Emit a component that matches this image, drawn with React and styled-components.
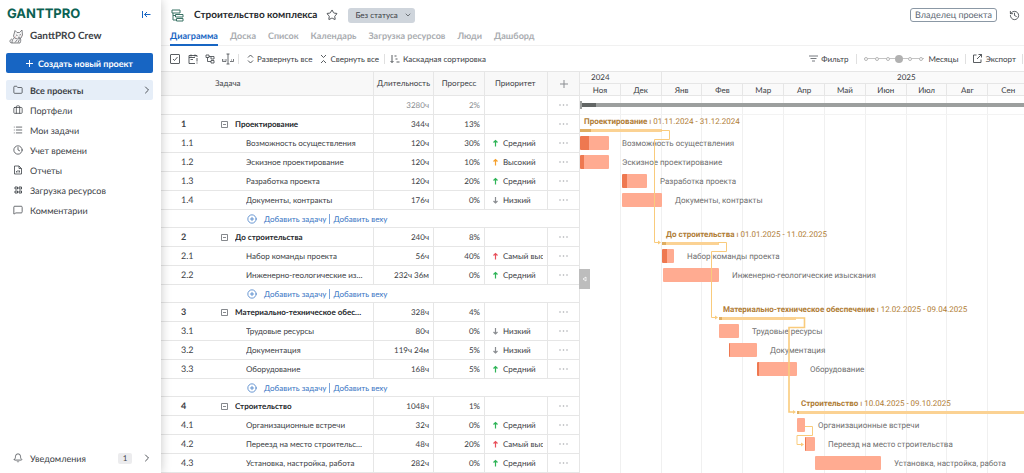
import React from 'react'
import styled, { createGlobalStyle } from 'styled-components'
import {
  Bell,
  Briefcase,
  ChevronDown,
  ChevronRight,
  CirclePlus,
  Clock,
  Folder,
  History,
  List,
  MessageSquare,
  Star,
} from 'lucide-react'

const colors = {
  blue: '#1765c3',
  text: '#3c4146',
  muted: '#a9acb0',
  line: '#e6e6e6',
  bar: '#ffab91',
  barDone: '#ee7850',
  summary: '#fbd293',
  summaryDone: '#dfae62',
  summaryText: '#b07d36',
}

const GlobalStyle = createGlobalStyle`
  * {
    box-sizing: border-box;
  }
  body {
    margin: 0;
    background: #fff;
    color: ${colors.text};
    font-family: Lato, "Liberation Sans", sans-serif;
    font-size: 8px;
    text-rendering: geometricPrecision;
    overflow: hidden;
  }
  button, input, select {
    font: inherit;
    color: inherit;
    text-rendering: inherit;
  }
  button {
    border: 0;
    padding: 0;
    background: none;
    cursor: pointer;
  }
  a {
    color: inherit;
    text-decoration: none;
  }
  svg {
    flex: none;
    display: block;
  }
`

const Page = styled.div`
  display: grid;
  grid-template-columns: 161px minmax(0, 1fr);
  height: 100vh;
`

/* sidebar */

const Sidebar = styled.aside`
  position: relative;
  z-index: 5;
  display: flex;
  flex-direction: column;
  padding: 8px 8px 5px 6px;
  background: #fff;
  box-shadow: 0 0 10px rgba(0, 0, 0, 0.22);
`
const LogoRow = styled.div`
  display: flex;
  align-items: center;
  justify-content: space-between;
  height: 12px;
  padding: 0 2px 0 1px;
  color: ${colors.blue};
`
const Logo = styled.a`
  color: #0b6152;
  font-family: Inter, sans-serif;
  font-size: 13px;
  font-weight: 700;
  line-height: 13px;
`
const Team = styled.div`
  display: flex;
  align-items: center;
  gap: 6px;
  height: 16px;
  margin: 8px 0 9px;
  padding-left: 3px;
  font-size: 10px;
  font-weight: 700;
`
const NewProject = styled.button`
  display: flex;
  align-items: center;
  justify-content: center;
  gap: 5px;
  height: 20px;
  margin-bottom: 7px;
  border-radius: 2px;
  background: ${colors.blue};
  color: #fff;
  font-size: 9px;
  font-weight: 700;
`
const NavItem = styled.a`
  display: flex;
  align-items: center;
  gap: 7px;
  height: 20px;
  padding: 0 0 0 7px;
  border-radius: 2px;
  background: ${props => props.$active ? '#e6eef8' : 'transparent'};
  font-size: 9px;
  font-weight: ${props => props.$active ? 700 : 400};
`
const NavLabel = styled.span`
  flex: 1;
`
const Notifications = styled(NavItem)`
  margin-top: auto;
`
const Count = styled.span`
  width: 14px;
  margin-right: 2px;
  border-radius: 2px;
  background: #ececee;
  font-size: 8px;
  line-height: 11px;
  text-align: center;
`

/* project header */

const Main = styled.main`
  display: flex;
  flex-direction: column;
  min-width: 0;
  overflow: hidden;
`
const ProjectHeader = styled.header`
  display: flex;
  align-items: center;
  height: 30px;
  padding: 0 4px 0 10px;
`
const ProjectTitle = styled.h1`
  margin: 0 9px 0 10px;
  color: #26292d;
  font-size: 10px;
  font-weight: 700;
`
const StatusButton = styled.button`
  display: flex;
  align-items: center;
  justify-content: space-between;
  width: 67px;
  height: 15px;
  margin-left: 10px;
  padding: 0 3px 0 7px;
  border-radius: 3px;
  background: #cfd5dc;
  font-size: 8px;
`
const OwnerButton = styled.button`
  height: 14px;
  margin: 0 12px 0 auto;
  padding: 0 4px;
  border: 1px solid #8b98a5;
  border-radius: 3px;
  color: #5d6874;
  font-size: 9px;
  line-height: 12px;
`
const Tabs = styled.nav`
  display: flex;
  gap: 12px;
  height: 16px;
  padding-left: 9px;
  border-bottom: 1px solid #f1f1f1;
`
const Tab = styled.a`
  height: 16px;
  border-bottom: ${props => props.$active ? `2px solid ${colors.blue}` : '0'};
  color: ${props => props.$active ? colors.blue : colors.muted};
  font-size: 9px;
  font-weight: 700;
  line-height: 12px;
`

/* toolbar */

const Toolbar = styled.div`
  display: flex;
  align-items: center;
  height: 25px;
  padding: 0 1px 0 9px;
`
const ToolButton = styled.button`
  display: flex;
  align-items: center;
  gap: 3px;
  margin-right: ${props => props.$gap || 0}px;
  white-space: nowrap;
`
const Divider = styled.span`
  width: 1px;
  height: 10px;
  margin-right: ${props => props.$gap || 0}px;
  background: #e0e0e0;
`
const ToolbarRight = styled.div`
  display: flex;
  align-items: center;
  margin-left: auto;
`
const ZoomControl = styled.label`
  display: flex;
  align-items: center;
  gap: 5px;
  margin-right: 7px;
`
const ZoomTrack = styled.span`
  position: relative;
  display: flex;
  align-items: center;
  justify-content: space-between;
  width: 60px;
  height: 10px;
  background: linear-gradient(#c4c4c4, #c4c4c4) center / 100% 1px no-repeat;
`
const ZoomStop = styled.i`
  width: 4px;
  height: 4px;
  border: 1px solid #b8b8b8;
  border-radius: 50%;
  background: #fff;
`
const ZoomInput = styled.input`
  position: absolute;
  inset: 0 -2px;
  width: 64px;
  height: 10px;
  margin: 0;
  appearance: none;
  background: none;
  &::-webkit-slider-thumb {
    appearance: none;
    width: 8px;
    height: 8px;
    border-radius: 50%;
    background: #b1b1b1;
  }
`

/* task table */

const Workspace = styled.div`
  position: relative;
  display: grid;
  grid-template-columns: 419px minmax(0, 1fr);
  flex: 1;
  min-height: 0;
  overflow: hidden;
  border-top: 1px solid ${colors.line};
`
const TaskTable = styled.table`
  width: 419px;
  height: max-content;
  border-collapse: separate;
  border-spacing: 0;
  border-right: 1px solid ${colors.line};
  table-layout: fixed;
`
const HeadCell = styled.th`
  height: 24px;
  padding: 0 0 0 ${props => props.$pad || 0}px;
  border-right: 1px solid ${colors.line};
  border-bottom: 1px solid ${colors.line};
  background: #f8f8f8;
  font-size: 8px;
  font-weight: 400;
  line-height: 23px;
  text-align: ${props => props.$left ? 'left' : 'center'};
  white-space: nowrap;
  &:last-child {
    border-right: 0;
  }
`
const Cell = styled.td`
  padding: 0;
  border-right: ${props => props.$open ? '0' : `1px solid ${colors.line}`};
  border-bottom: 1px solid ${colors.line};
  font-size: 8px;
  font-weight: ${props => props.$bold ? 700 : 400};
  line-height: 18px;
  white-space: nowrap;
  overflow: hidden;
  &:last-child {
    border-right: 0;
  }
`
const IndexCell = styled(Cell)`
  padding-left: 20px;
  font-size: 9px;
`
const NumberCell = styled(Cell)`
  padding-right: 4px;
  color: ${props => props.$faded ? '#8b8e92' : colors.text};
  text-align: right;
`
const TaskName = styled.div`
  display: flex;
  align-items: center;
  gap: 7px;
  height: 18px;
  padding-left: ${props => props.$group ? 3 : 28}px;
  color: ${props => props.$group ? '#26292d' : colors.text};
`
const Ellipsis = styled.span`
  overflow: hidden;
  width: ${props => props.$group ? 130 : 119}px;
  text-overflow: ellipsis;
`
const Priority = styled.div`
  display: flex;
  align-items: center;
  gap: 4px;
  height: 18px;
  margin-right: 4px;
  padding-left: 7px;
  overflow: hidden;
`
const MenuButton = styled.button`
  display: flex;
  align-items: center;
  justify-content: center;
  width: 100%;
  height: 18px;
  color: ${colors.muted};
`
const AddLinks = styled.div`
  display: flex;
  align-items: center;
  height: 17px;
  padding-left: 86px;
  color: #3a76c4;
`
const AddButton = styled.button`
  height: 10px;
  margin-left: ${props => props.$first ? 7 : 0}px;
  padding-right: 3px;
  line-height: 10px;
  & + & {
    padding-left: 3px;
    border-left: 1px solid #7ba5dc;
  }
`

/* timeline */

const Timeline = styled.section`
  position: relative;
  overflow: hidden;
  min-width: 0;
`
const Calendar = styled.div`
  width: 490px;
  min-width: 100%;
`
const Years = styled.div`
  display: grid;
  grid-template-columns: 2fr 10fr;
  height: 12px;
  background: #fafafa;
  line-height: 11px;
`
const Year = styled.div`
  padding-right: ${props => props.$short ? 40 : 0}px;
  border-right: 1px solid ${colors.line};
  border-bottom: 1px solid ${colors.line};
  text-align: center;
  & + & {
    padding-left: 82px;
  }
`
const Months = styled.div`
  display: grid;
  grid-template-columns: repeat(12, 1fr);
  height: 12px;
  border-bottom: 1px solid ${colors.line};
  background: #fafafa;
  line-height: 12px;
  text-align: center;
`
const Month = styled.div`
  border-right: 1px solid ${colors.line};
`
const MonthLines = styled(Months)`
  position: absolute;
  top: 24px;
  left: 0;
  z-index: -1;
  width: 490px;
  height: 100%;
  border: 0;
  background: none;
  & > div {
    border-color: #f0f0f0;
  }
`
const Rows = styled.div`
  isolation: isolate;
  font-family: Roboto, "Liberation Sans", Arial, sans-serif;
  white-space: nowrap;
`
const TotalRow = styled.div`
  display: flex;
  align-items: center;
  height: 19px;
  border-bottom: 1px solid #f3f3f3;
`
const TotalCap = styled.div`
  width: 2px;
  height: 8px;
  background: #9c9f9e;
`
const TotalBar = styled.div`
  flex: 1;
  height: 4px;
  border-left: 14px solid #626665;
  background: #9c9f9e;
`
const TaskRow = styled.div`
  display: flex;
  align-items: center;
  gap: 13px;
  height: 19px;
  padding: 0 0 1px ${props => props.$start}px;
`
const SummaryRow = styled(TaskRow)`
  flex-direction: column;
  align-items: flex-start;
  gap: 1px;
`
const Spacer = styled.div`
  height: 18px;
`
const Bar = styled.div`
  flex: none;
  width: ${props => props.$width}px;
  height: 14px;
  border-left: ${props => props.$done}px solid ${colors.barDone};
  border-radius: 1px;
  background: ${colors.bar};
`
const SummaryBar = styled(Bar)`
  height: 3px;
  border-color: ${colors.summaryDone};
  border-radius: 0;
  background: ${colors.summary};
`
const BarLabel = styled.span`
  color: #6f6f6f;
  font-size: 8px;
`
const SummaryLabel = styled.span`
  height: 13px;
  padding-left: 4px;
  color: ${colors.summaryText};
  font-size: 8px;
  line-height: 13px;
`
const Links = styled.svg`
  position: absolute;
  top: 0;
  left: 0;
  pointer-events: none;
`
const Splitter = styled.button`
  position: absolute;
  top: 197px;
  left: 418px;
  z-index: 2;
  display: flex;
  align-items: center;
  justify-content: center;
  width: 11px;
  height: 20px;
  background: #bdbdbd;
  color: #fff;
`

const navigation = [
  { label: 'Все проекты', icon: <Folder size={10} strokeWidth={1.8} />, active: true },
  { label: 'Портфели', icon: <Briefcase size={10} strokeWidth={1.8} /> },
  { label: 'Мои задачи', icon: <List size={10} strokeWidth={1.8} /> },
  { label: 'Учет времени', icon: <Clock size={10} strokeWidth={1.8} /> },
  { label: 'Отчеты', icon: <ReportIcon /> },
  { label: 'Загрузка ресурсов', icon: <WorkloadIcon /> },
  { label: 'Комментарии', icon: <MessageSquare size={10} strokeWidth={1.8} /> },
]

const tabs = ['Диаграмма', 'Доска', 'Список', 'Календарь', 'Загрузка ресурсов', 'Люди', 'Дашборд']
const months = ['Ноя', 'Дек', 'Янв', 'Фев', 'Мар', 'Апр', 'Май', 'Июн', 'Июл', 'Авг', 'Сен', 'Окт']

const priorities = {
  highest: { label: 'Самый высокий', color: '#e8505b' },
  high: { label: 'Высокий', color: '#f5a02c' },
  medium: { label: 'Средний', color: '#2fb457' },
  low: { label: 'Низкий', color: '#8a8d91', down: true },
}

const groups = [
  {
    id: '1', name: 'Проектирование', hours: '344ч', progress: 13,
    start: 0, width: 82, done: 11, dates: '01.11.2024 - 31.12.2024',
    tasks: [
      { id: '1.1', name: 'Возможность осуществления', hours: '120ч', progress: 30, priority: 'medium', start: 0, width: 29, done: 9 },
      { id: '1.2', name: 'Эскизное проектирование', hours: '120ч', progress: 10, priority: 'high', start: 0, width: 29, done: 4 },
      { id: '1.3', name: 'Разработка проекта', hours: '120ч', progress: 20, priority: 'medium', start: 42, width: 25, done: 5 },
      { id: '1.4', name: 'Документы, контракты', hours: '176ч', progress: 0, priority: 'low', start: 42, width: 40, done: 0 },
    ],
  },
  {
    id: '2', name: 'До строительства', hours: '240ч', progress: 8,
    start: 82, width: 57, done: 4, dates: '01.01.2025 - 11.02.2025',
    tasks: [
      { id: '2.1', name: 'Набор команды проекта', hours: '56ч', progress: 40, priority: 'highest', start: 82, width: 12, done: 5 },
      { id: '2.2', name: 'Инженерно-геологические изыскания', hours: '232ч 36м', progress: 0, priority: 'medium', start: 83, width: 56, done: 0 },
    ],
  },
  {
    id: '3', name: 'Материально-техническое обеспечение', hours: '328ч', progress: 4,
    start: 139, width: 77, done: 3, dates: '12.02.2025 - 09.04.2025',
    tasks: [
      { id: '3.1', name: 'Трудовые ресурсы', hours: '80ч', progress: 0, priority: 'low', start: 139, width: 20, done: 0 },
      { id: '3.2', name: 'Документация', hours: '119ч 24м', progress: 5, priority: 'low', start: 149, width: 28, done: 1 },
      { id: '3.3', name: 'Оборудование', hours: '168ч', progress: 5, priority: 'medium', start: 177, width: 40, done: 2 },
    ],
  },
  {
    id: '4', name: 'Строительство', hours: '1048ч', progress: 1, open: true,
    start: 217, width: 260, done: 2, dates: '10.04.2025 - 09.10.2025',
    tasks: [
      { id: '4.1', name: 'Организационные встречи', hours: '32ч', progress: 0, priority: 'medium', start: 217, width: 8, done: 0 },
      { id: '4.2', name: 'Переезд на место строительства', hours: '48ч', progress: 20, priority: 'highest', start: 225, width: 10, done: 1 },
      { id: '4.3', name: 'Установка, настройка, работа', hours: '282ч', progress: 0, priority: 'medium', start: 235, width: 66, done: 0 },
    ],
  },
]

function ReportIcon() {
  return (
    <svg width="10" height="10" viewBox="0 0 20 20" fill="none" stroke="currentColor" strokeWidth="1.6">
      <path d="M3 2h9l5 5v11H3zM12 2v5h5M7 15v-3M10 15v-5M13 15v-4" />
    </svg>
  )
}

function WorkloadIcon() {
  return (
    <svg width="10" height="10" viewBox="0 0 20 20" fill="none" stroke="currentColor" strokeWidth="1.8">
      <path d="M4 4h5v4H4zM12 4h5v4h-5zM4 12h5v4H4zM12 12h5v4h-5z" />
    </svg>
  )
}

function TeamAvatar() {
  return (
    <svg width="15" height="15" viewBox="0 0 30 30" fill="#f4f4f5" stroke="#55565a" strokeWidth="1.4">
      <path d="M11 17c-4 3-5 6-5 11h16c2-4 2-7 0-11M6 28c-6 0-5-7 0-8M12 27l4-5M18 27l3-6" />
      <path d="M9 14 12 3l4 4h5l5-5 1 10-3 6-7 2-6-2z" />
      <path d="m14 12 3 1M21 12l3-1M18 16l2 1 2-1" fill="none" />
      <path d="M25 14h1M12 16h2" stroke="#e79a8f" />
    </svg>
  )
}

function CollapseIcon() {
  return (
    <svg width="9" height="9" viewBox="0 0 18 18" fill="none" stroke="currentColor" strokeWidth="2">
      <path d="M1 2v14M17 9H5M10 4 5 9l5 5" />
    </svg>
  )
}

function PlusGlyph() {
  return (
    <svg width="7" height="7" viewBox="0 0 14 14" stroke="currentColor" strokeWidth="2">
      <path d="M7 0v14M0 7h14" />
    </svg>
  )
}

function ProjectIcon() {
  return (
    <svg width="13" height="13" viewBox="0 0 26 26" fill="none" stroke="#397264" strokeWidth="2">
      <path d="M2 2h16v6H2zM9 11h15v5H9zM11 19h13v5H11zM4 8v14h7M4 13h5" />
    </svg>
  )
}

function CheckboxIcon() {
  return (
    <svg width="10" height="10" viewBox="0 0 20 20" fill="none" stroke="currentColor" strokeWidth="1.7">
      <rect x="1" y="1" width="18" height="18" rx="1" />
      <path d="m6 10 3 3 6-7" />
    </svg>
  )
}

function DeadlineIcon() {
  return (
    <svg width="10" height="10" viewBox="0 0 20 20" fill="none" stroke="currentColor" strokeWidth="1.7">
      <path d="M14 19H2V3h16v3M2 7h12M6 1v4M14 1v4M5 11h5M18 8v7M18 17v2" />
    </svg>
  )
}

function TreeIcon() {
  return (
    <svg width="10" height="10" viewBox="0 0 20 20" fill="none" stroke="currentColor" strokeWidth="1.6">
      <path d="M2 2h6v5H2zM12 5h6v5h-6zM12 13h6v5h-6zM8 5h4M5 7v8h7" />
    </svg>
  )
}

function SplitIcon() {
  return (
    <svg width="12" height="12" viewBox="0 0 24 24" fill="none" stroke="currentColor" strokeWidth="1.6">
      <path d="M12 2v20M9 2h6M9 22h6" />
      <path d="M1 12v5h7v-5M16 17h7v-5M4 13v2M19 13v2" strokeWidth="1.4" />
    </svg>
  )
}

function ExpandIcon() {
  return (
    <svg width="7" height="10" viewBox="0 0 14 20" fill="none" stroke="currentColor" strokeWidth="1.7">
      <path d="m2 7 5-5 5 5M2 13l5 5 5-5" />
    </svg>
  )
}

function ShrinkIcon() {
  return (
    <svg width="7" height="10" viewBox="0 0 14 20" fill="none" stroke="currentColor" strokeWidth="1.7">
      <path d="m2 2 5 5 5-5M2 18l5-5 5 5" />
    </svg>
  )
}

function CascadeIcon() {
  return (
    <svg width="10" height="10" viewBox="0 0 20 20" fill="none" stroke="currentColor" strokeWidth="1.7">
      <path d="M4 2v15M1 14l3 3 3-3M9 4h4M11 10h4M13 16h6" />
    </svg>
  )
}

function FilterIcon() {
  return (
    <svg width="9" height="7" viewBox="0 0 18 14" stroke="#777b80" strokeWidth="2">
      <path d="M0 2h18M3 7h12M6 12h6" />
    </svg>
  )
}

function ExportIcon() {
  return (
    <svg width="9" height="9" viewBox="0 0 18 18" fill="none" stroke="currentColor" strokeWidth="1.7">
      <path d="M7 2H1v15h15v-6M11 1h6v6M17 1l-9 9" />
    </svg>
  )
}

function MinusBox() {
  return (
    <svg width="7" height="7" viewBox="0 0 14 14" fill="none" stroke="#777b80" strokeWidth="1.8">
      <path d="M1 1h12v12H1zM4 7h6" />
    </svg>
  )
}

function PlusMark() {
  return (
    <svg width="8" height="8" viewBox="0 0 8 8" stroke="#8a8d91">
      <path d="M4 0v8M0 4h8" />
    </svg>
  )
}

function Dots() {
  return (
    <svg width="9" height="2" viewBox="0 0 18 4" fill="currentColor">
      <circle cx="2" cy="2" r="1.6" />
      <circle cx="9" cy="2" r="1.6" />
      <circle cx="16" cy="2" r="1.6" />
    </svg>
  )
}

function PriorityArrow({ color, down }) {
  return (
    <svg width="7" height="8" viewBox="0 0 14 16" fill="none" stroke={color} strokeWidth="2.4">
      {down ? <path d="M7 2v12M3 10l4 4 4-4" /> : <path d="M7 15V3M3 7l4-4 4 4" />}
    </svg>
  )
}

function DependencyLinks() {
  return (
    <Links width="444" height="402" fill="none" stroke="#f9cb7c">
      <path d="M81 58.5h8.5v9h-15v103h5" />
      <path d="M138 170.5h8.5v9h-15v66h5" />
      <path d="M216 246h8.5v9.5H209V340h5" strokeWidth="1.6" />
      <path d="M225 354.5h7.5v9H217v9h5" />
      <path
        d="M78 168.5v4l3-2zM135 243.5v4l3-2zM213 338v4l3-2zM221 370.5v4l3-2z"
        fill="#f9cb7c"
        stroke="none"
      />
    </Links>
  )
}

const MenuCell = () => (
  <Cell>
    <MenuButton aria-label="Меню задачи"><Dots /></MenuButton>
  </Cell>
)

const GroupRows = ({ group }) => (
  <>
    <tr>
      <IndexCell $bold $open>{group.id}</IndexCell>
      <Cell $bold>
        <TaskName $group>
          <MinusBox />
          <Ellipsis $group>{group.name}</Ellipsis>
        </TaskName>
      </Cell>
      <NumberCell>{group.hours}</NumberCell>
      <NumberCell>{group.progress}%</NumberCell>
      <Cell />
      <MenuCell />
    </tr>
    {group.tasks.map(task => (
      <tr key={task.id}>
        <IndexCell $open>{task.id}</IndexCell>
        <Cell>
          <TaskName>
            <Ellipsis>{task.name}</Ellipsis>
          </TaskName>
        </Cell>
        <NumberCell>{task.hours}</NumberCell>
        <NumberCell>{task.progress}%</NumberCell>
        <Cell>
          <Priority>
            <PriorityArrow {...priorities[task.priority]} />
            {priorities[task.priority].label}
          </Priority>
        </Cell>
        <MenuCell />
      </tr>
    ))}
    {!group.open && (
      <tr>
        <Cell colSpan={6}>
          <AddLinks>
            <CirclePlus size={10} strokeWidth={1.8} />
            <AddButton $first>Добавить задачу</AddButton>
            <AddButton>Добавить веху</AddButton>
          </AddLinks>
        </Cell>
      </tr>
    )}
  </>
)

const GroupBars = ({ group }) => (
  <>
    <SummaryRow $start={group.start}>
      <SummaryLabel><b>{group.name}</b> ı {group.dates}</SummaryLabel>
      <SummaryBar $width={group.width} $done={group.done} />
    </SummaryRow>
    {group.tasks.map(task => (
      <TaskRow key={task.id} $start={task.start}>
        <Bar $width={task.width} $done={task.done} />
        <BarLabel>{task.name}</BarLabel>
      </TaskRow>
    ))}
    {!group.open && <Spacer />}
  </>
)

const App = () => (
  <Page>
    <GlobalStyle />
    <Sidebar>
      <LogoRow>
        <Logo href="#">GANTTPRO</Logo>
        <button aria-label="Свернуть меню"><CollapseIcon /></button>
      </LogoRow>
      <Team><TeamAvatar />GanttPRO Crew</Team>
      <NewProject><PlusGlyph />Создать новый проект</NewProject>
      {navigation.map(item => (
        <NavItem key={item.label} href="#" $active={item.active}>
          {item.icon}
          <NavLabel>{item.label}</NavLabel>
          {item.active && <ChevronRight size={12} strokeWidth={1.8} />}
        </NavItem>
      ))}
      <Notifications href="#">
        <Bell size={10} strokeWidth={1.8} />
        <NavLabel>Уведомления</NavLabel>
        <Count>1</Count>
        <ChevronRight size={12} strokeWidth={1.8} />
      </Notifications>
    </Sidebar>
    <Main>
      <ProjectHeader>
        <ProjectIcon />
        <ProjectTitle>Строительство комплекса</ProjectTitle>
        <button aria-label="В избранное"><Star size={12} strokeWidth={1.8} /></button>
        <StatusButton>Без статуса<ChevronDown size={8} /></StatusButton>
        <OwnerButton>Владелец проекта</OwnerButton>
        <button aria-label="История"><History size={11} strokeWidth={1.8} /></button>
      </ProjectHeader>
      <Tabs>
        {tabs.map((tab, i) => <Tab key={tab} href="#" $active={i === 0}>{tab}</Tab>)}
      </Tabs>
      <Toolbar>
        <ToolButton $gap={8} aria-label="Выбрать"><CheckboxIcon /></ToolButton>
        <ToolButton $gap={7} aria-label="Дедлайн"><DeadlineIcon /></ToolButton>
        <ToolButton $gap={7} aria-label="Структура"><TreeIcon /></ToolButton>
        <ToolButton $gap={4} aria-label="Разделить"><SplitIcon /></ToolButton>
        <Divider $gap={8} />
        <ToolButton $gap={8}><ExpandIcon />Развернуть все</ToolButton>
        <ToolButton $gap={5}><ShrinkIcon />Свернуть все</ToolButton>
        <Divider $gap={5} />
        <ToolButton><CascadeIcon />Каскадная сортировка</ToolButton>
        <ToolbarRight>
          <ToolButton $gap={7}><FilterIcon />Фильтр</ToolButton>
          <Divider $gap={7} />
          <ZoomControl>
            <ZoomTrack>
              {[0, 1, 2, 3, 4, 5].map(stop => <ZoomStop key={stop} />)}
              <ZoomInput type="range" min="0" max="5" defaultValue="3" />
            </ZoomTrack>
            Месяцы
          </ZoomControl>
          <Divider $gap={7} />
          <ToolButton $gap={6}><ExportIcon />Экспорт</ToolButton>
          <Divider />
        </ToolbarRight>
      </Toolbar>
      <Workspace>
        <TaskTable>
          <colgroup>
            <col width="57" />
            <col width="156" />
            <col width="60" />
            <col width="51" />
            <col width="63" />
            <col />
          </colgroup>
          <thead>
            <tr>
              <HeadCell colSpan={2} $left $pad={54}>Задача</HeadCell>
              <HeadCell>Длительность</HeadCell>
              <HeadCell>Прогресс</HeadCell>
              <HeadCell $left $pad={10}>Приоритет</HeadCell>
              <HeadCell><MenuButton aria-label="Добавить столбец"><PlusMark /></MenuButton></HeadCell>
            </tr>
          </thead>
          <tbody>
            <tr>
              <Cell colSpan={2} />
              <NumberCell $faded>3280ч</NumberCell>
              <NumberCell $faded>2%</NumberCell>
              <Cell />
              <MenuCell />
            </tr>
            {groups.map(group => <GroupRows key={group.id} group={group} />)}
          </tbody>
        </TaskTable>
        <Timeline>
          <Calendar>
            <Years>
              <Year $short>2024</Year>
              <Year>2025</Year>
            </Years>
            <Months>
              {months.map(month => <Month key={month}>{month}</Month>)}
            </Months>
            <Rows>
              <MonthLines>
                {months.map(month => <Month key={month} />)}
              </MonthLines>
              <TotalRow><TotalCap /><TotalBar /></TotalRow>
              {groups.map(group => <GroupBars key={group.id} group={group} />)}
            </Rows>
          </Calendar>
          <DependencyLinks />
        </Timeline>
        <Splitter aria-label="Свернуть таблицу">
          <svg width="5" height="6" viewBox="0 0 10 12" fill="none" stroke="currentColor" strokeWidth="1.5">
            <path d="M8 2v8L2 6z" />
          </svg>
        </Splitter>
      </Workspace>
    </Main>
  </Page>
)

export default App
